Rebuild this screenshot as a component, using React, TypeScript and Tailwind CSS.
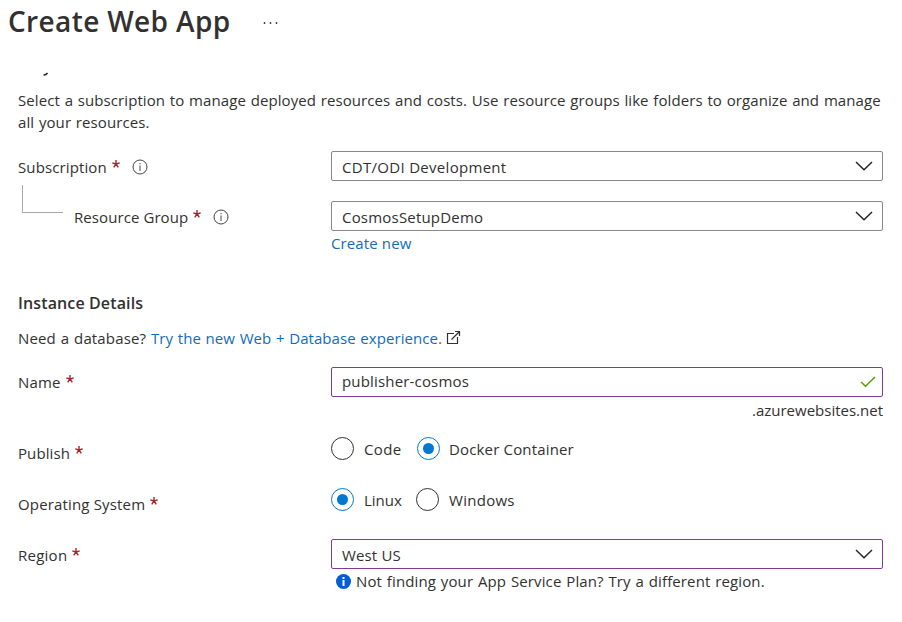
import type { ReactNode } from 'react';

function Label({ text, className, info }: { text: string; className: string; info?: string }) {
  return (
    <span className="flex h-5 items-center whitespace-nowrap">
      <span className={className}>{text}</span>
      <svg className="-mt-1.5 ml-[5px] text-[#a4262c]" width="8" height="8" viewBox="0 0 8 8" fill="none" stroke="currentColor" strokeWidth="1.4">
        <path d="M4 0V4M4 4L.3 2.9M4 4L7.7 2.9M4 4L1.7 7.3M4 4L6.3 7.3" />
      </svg>
      {info && (
        <svg className={info} width="16" height="16" viewBox="0 0 16 16" fill="none" stroke="#444" strokeWidth="1">
          <circle cx="8" cy="8" r="7" />
          <path d="M8 6.5V12M8 4V5.2" />
        </svg>
      )}
    </span>
  );
}

function Chevron() {
  return (
    <svg width="18" height="10" viewBox="0 0 18 10" fill="none" stroke="#222" strokeWidth="1.4">
      <path d="M1 1L9 8.7L17 1" />
    </svg>
  );
}

function Field({ value, className, border, children }: { value: string; className: string; border: string; children: ReactNode }) {
  return (
    <div className={`flex h-[30px] w-[552px] items-center justify-between rounded-[2px] border pl-[10px] ${border}`}>
      <span className={className}>{value}</span>
      {children}
    </div>
  );
}

function Radio({ checked = false }: { checked?: boolean }) {
  return (
    <span className={`-mt-0.5 flex size-[23px] shrink-0 items-center justify-center rounded-full border ${checked ? 'border-[#0078d4]' : 'border-[#323130]'}`}>
      {checked && <span className="size-[11px] rounded-full bg-[#0078d4]" />}
    </span>
  );
}

export default function App() {
  return (
    <main className="h-[622px] w-[902px] overflow-hidden bg-white font-['Open_Sans','Noto_Sans',sans-serif] text-[15px] leading-5 text-[#323130]">
      <header className="flex h-11 items-center pl-2">
        <h1 className="-mt-0.5 w-[254px] text-[28px] font-semibold tracking-[0.37px] whitespace-nowrap">Create Web App</h1>
        <svg className="mt-0.5" width="16" height="4" viewBox="0 0 16 4" fill="#323130">
          <circle cx="2.5" cy="2" r=".9" />
          <circle cx="8.5" cy="2" r=".9" />
          <circle cx="14.5" cy="2" r=".9" />
        </svg>
      </header>
      <div className="h-[45px] pt-[28px] pl-[43px]">
        <svg width="6" height="4" viewBox="0 0 6 4" fill="none" stroke="#222" strokeWidth="1.5">
          <path d="M.5 3Q3 3.2 4.5 1" />
        </svg>
      </div>
      <section className="pl-[18px]">
        <p className="leading-[22px] tracking-[0.08px] whitespace-nowrap [word-spacing:0.78px]">
          <span>Select a subscription to manage deployed resources and costs. Use resource groups like folders to organize and manage</span>
          <br />
          <span>all your resources.</span>
        </p>
        <div className="mt-[18px] flex h-[34px]">
          <div className="w-[313px] pt-1.5"><Label text="Subscription" className="tracking-[0.12px]" info="ml-3" /></div>
          <Field value="CDT/ODI Development" className="pt-0.5 tracking-[0.3px]" border="border-[#8a8886] pr-[9px]"><Chevron /></Field>
        </div>
        <div className="flex h-[55px]">
          <div className="ml-1 h-7 w-[41px] border-b border-l border-[#a9a8a6]" />
          <div className="ml-[11px] w-[257px] pt-[22px]"><Label text="Resource Group" className="tracking-[0.08px]" info="ml-3" /></div>
          <div className="pt-4">
            <Field value="CosmosSetupDemo" className="pt-0.5 tracking-[0.2px]" border="border-[#8a8886] pr-[9px]"><Chevron /></Field>
            <a className="block pt-[2px] tracking-[0.12px] text-[#0f6cbd]">Create new</a>
          </div>
        </div>
      </section>
      <section className="pt-[53px] pl-[18px]">
        <h2 className="text-[16px] font-semibold tracking-[0.12px]">Instance Details</h2>
        <div className="mt-[15px] flex items-center whitespace-nowrap">
          <span className="w-[133px] tracking-[0.15px] [word-spacing:0.78px]">Need a database?</span>
          <a className="w-[295px] tracking-[0.06px] text-[#0f6cbd] [word-spacing:0.7px]">Try the new Web + Database experience.</a>
          <svg className="-mt-0.5" width="15" height="15" viewBox="0 0 15 15" fill="none" stroke="#323130" strokeWidth="1.2">
            <path d="M8 3.5H1.5V13.5H11.5V7M5.5 9.5L13.5 1.5M9 1.5H13.5V6" />
          </svg>
        </div>
        <div className="mt-[19px] flex">
          <div className="w-[313px] pt-[5px]"><Label text="Name" className="tracking-[0.2px]" /></div>
          <div>
            <Field value="publisher-cosmos" className="-mt-0.5 tracking-[0.17px]" border="border-[#813a95] pr-[6px]">
              <svg width="16" height="12" viewBox="0 0 16 12" fill="none" stroke="#57a300" strokeWidth="1.5">
                <path d="M1 6L5.5 10.3L15 1" />
              </svg>
            </Field>
            <p className="pt-[3px] pb-px text-right">.azurewebsites.net</p>
          </div>
        </div>
        <div className="mt-[16px] flex h-[51px]">
          <div className="w-[313px] pt-[6px]"><Label text="Publish" className="tracking-[0.1px]" /></div>
          <div className="flex h-6 items-center whitespace-nowrap">
            <Radio /><span className="ml-2.5 w-[53px] tracking-[0.4px]">Code</span>
            <Radio checked /><span className="ml-[9px] tracking-[0.16px]">Docker Container</span>
          </div>
        </div>
        <div className="flex h-[51px]">
          <div className="w-[313px] pt-[6px]"><Label text="Operating System" className="tracking-[0.16px]" /></div>
          <div className="flex h-6 items-center whitespace-nowrap">
            <Radio checked /><span className="ml-2.5 w-[52px]">Linux</span>
            <Radio /><span className="ml-2.5 tracking-[0.28px]">Windows</span>
          </div>
        </div>
        <div className="flex">
          <div className="w-[313px] pt-[6px]"><Label text="Region" className="tracking-[0.25px]" /></div>
          <div>
            <Field value="West US" className="pt-0.5 tracking-[0.15px]" border="border-[#813a95] pr-[9px]"><Chevron /></Field>
            <div className="flex h-6 items-center pl-[5px] whitespace-nowrap">
              <svg className="mr-[5px]" width="15" height="15" viewBox="0 0 15 15">
                <circle cx="7.5" cy="7.5" r="7.5" fill="#015cda" />
                <path d="M6.5 6h2v6h-2zM6.5 3h2v2h-2z" fill="white" />
              </svg>
              <span className="tracking-[0.12px] [word-spacing:0.78px]">Not finding your App Service Plan? Try a different region.</span>
            </div>
          </div>
        </div>
      </section>
    </main>
  );
}
